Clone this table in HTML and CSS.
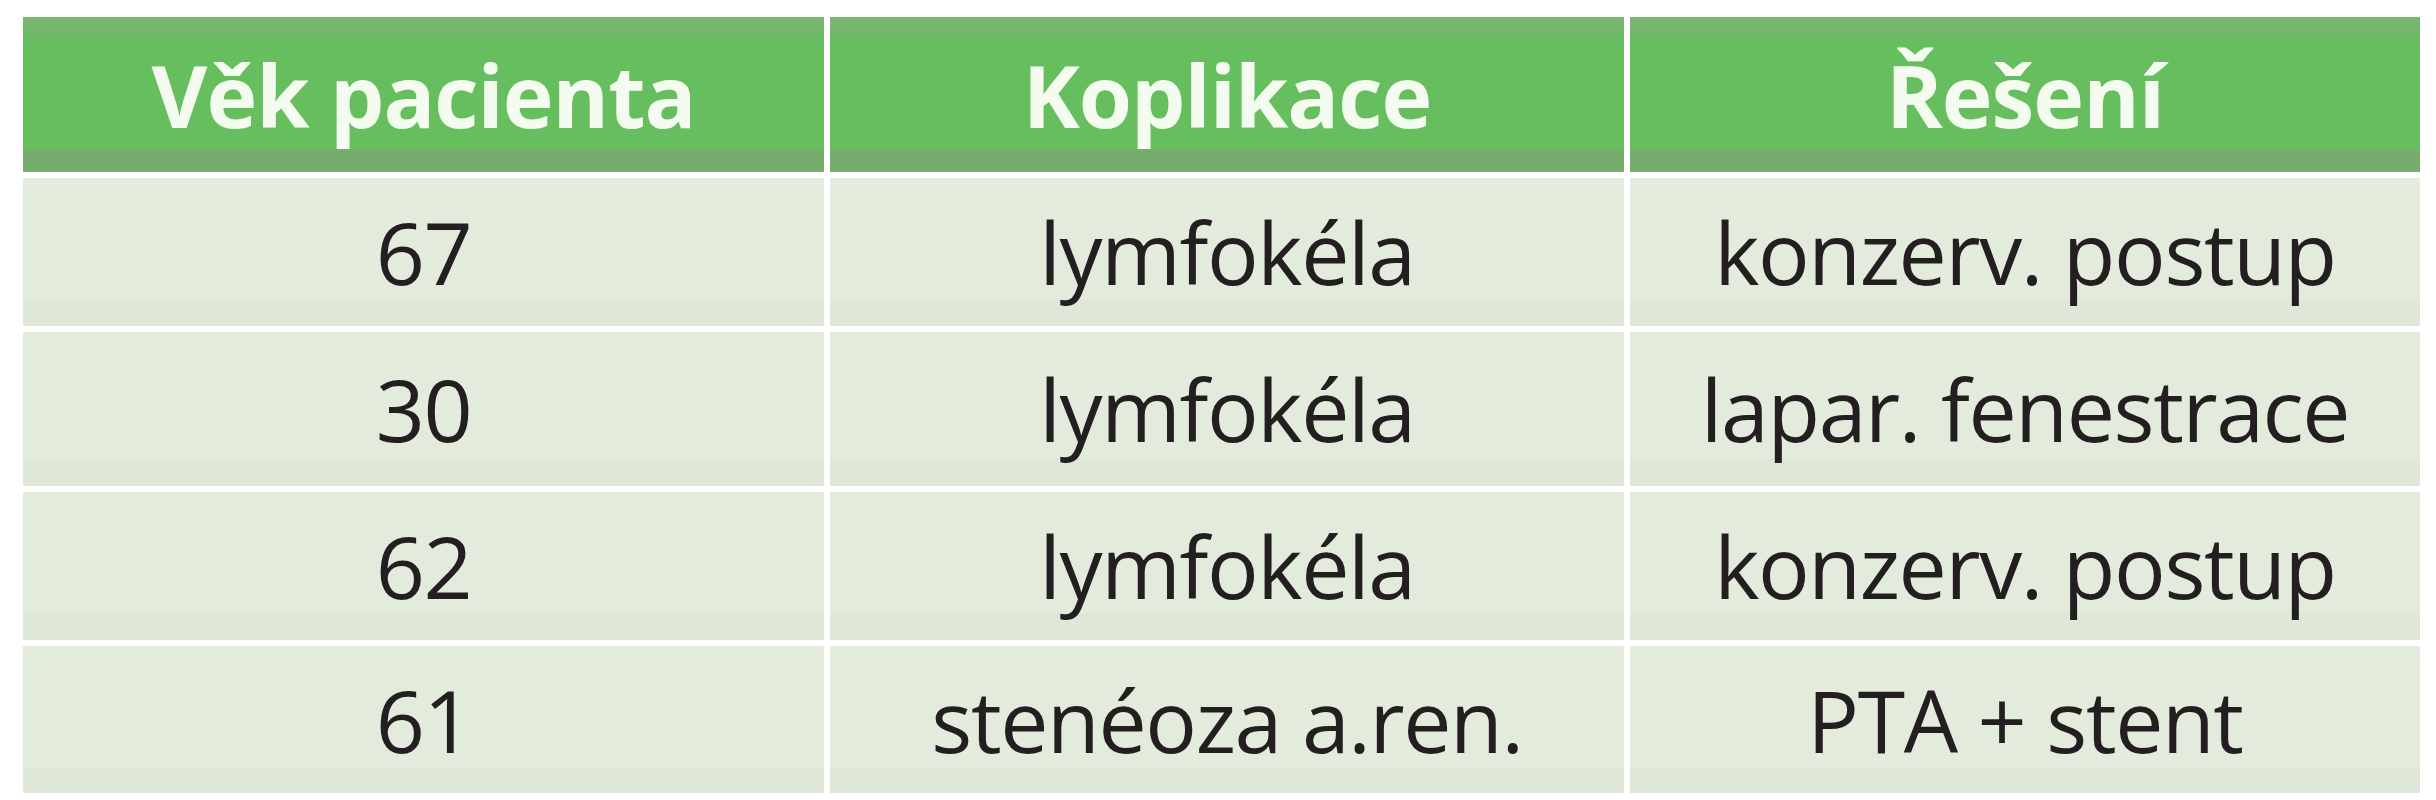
FILE: index.html
```html
<!DOCTYPE html>
<html lang="cs">
<head>
<meta charset="utf-8">
<title>Komplikace</title>
<link rel="stylesheet" href="styles.css">
</head>
<body>
<div class="table">
  <div class="cell head">Věk pacienta</div>
  <div class="cell head">Koplikace</div>
  <div class="cell head">Řešení</div>

  <div class="cell">67</div>
  <div class="cell">lymfokéla</div>
  <div class="cell">konzerv. postup</div>

  <div class="cell">30</div>
  <div class="cell">lymfokéla</div>
  <div class="cell">lapar. fenestrace</div>

  <div class="cell">62</div>
  <div class="cell">lymfokéla</div>
  <div class="cell">konzerv. postup</div>

  <div class="cell">61</div>
  <div class="cell">stenéoza a.ren.</div>
  <div class="cell">PTA + stent</div>
</div>
</body>
</html>
```
FILE: styles.css
```css
html, body {
  margin: 0;
  padding: 0;
  background: #ffffff;
}
body {
  padding: 17px 16px 0 23px;
  font-family: "Open Sans", "Noto Sans", sans-serif;
}
.table {
  display: grid;
  grid-template-columns: 801px 794px 790px;
  grid-template-rows: 155px 148px 154px 148px 147px;
  gap: 6px;
}
.cell {
  display: flex;
  align-items: center;
  justify-content: center;
  background: linear-gradient(to bottom, #e3ebdd 0, #e3ebdd 82%, #dfe8d8 82%, #dfe8d8 100%);
  color: #231f20;
  font-size: 86px;
  font-weight: 400;
  letter-spacing: -1.4px;
  line-height: 1;
}
.head {
  background: linear-gradient(to bottom, #7db574 0, #72b86a 10%, #66be5e 18%, #66be5e 85%, #76ad6c 86%, #76ad6c 100%);
  color: #f4fbef;
  font-weight: 700;
  font-size: 86px;
  letter-spacing: -1px;
}
```
